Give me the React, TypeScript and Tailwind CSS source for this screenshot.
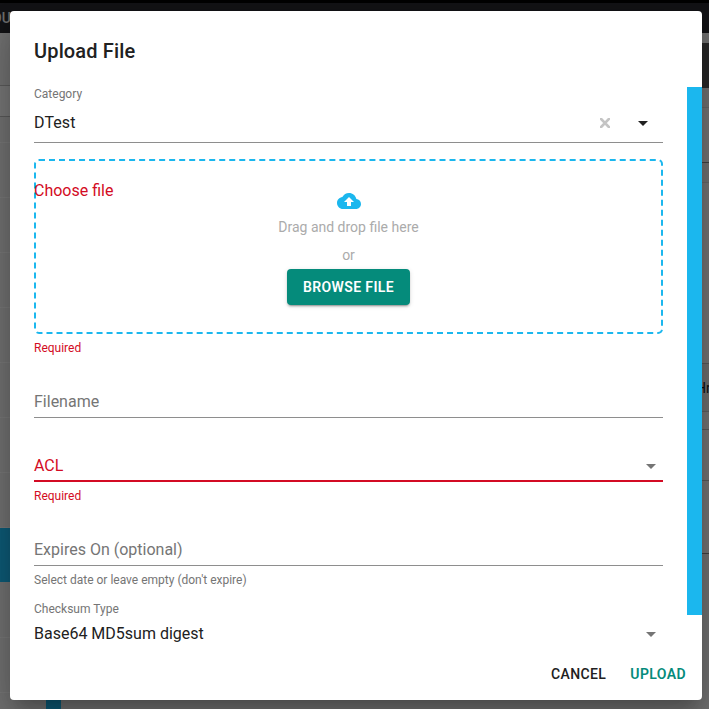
import React from "react";

function Caret({ className }: { className: string }) {
  return (
    <svg viewBox="0 0 24 24" className={`h-6 w-6 shrink-0 fill-current ${className}`}>
      <path d="M7 10l5 5 5-5z" />
    </svg>
  );
}

function Backdrop() {
  return (
    <div className="flex h-full flex-col bg-[#e4e4e4] text-[#1c1c1c]">
      <div className="h-[3px] shrink-0 bg-black" />
      <div className="flex h-[30px] shrink-0 items-center bg-[#26272d] pb-px">
        <span className="-ml-[8px] text-sm font-medium leading-none text-[#dddddd]">OU</span>
      </div>
      <div className="flex min-h-0 flex-1 justify-between">
        <div className="flex w-[61px] flex-col">
          <div className="h-[53px] shrink-0 border-b border-[#b8b8b8]" />
          <div className="h-[31px] shrink-0 border-b border-[#b4b4b4] bg-[#eeeeee]" />
          <div className="h-[26px] shrink-0 border-b border-[#f0f0f0]" />
          {[0, 1, 2, 3, 4, 5, 6].map((n) => (
            <div key={n} className="h-[55px] shrink-0 border-b border-[#f0f0f0]" />
          ))}
          <div className="h-[54px] shrink-0 bg-[#1bb7ee]" />
          <div className="h-[56px] shrink-0 border-b border-[#f0f0f0]" />
          <div className="h-[55px] shrink-0 border-b border-[#f0f0f0]" />
          <div className="ml-[46px] h-4 w-[15px] shrink-0 bg-[#1bb7ee]" />
        </div>
        <div className="flex w-[10px] flex-col">
          <div className="h-[10px] shrink-0" />
          <div className="h-[45px] shrink-0 bg-[#505050]" />
          <div className="h-[20px] shrink-0 border-b border-[#cfcfcf]" />
          <div className="h-[55px] shrink-0 border-b border-[#858585] bg-[#eaeaea]" />
          <div className="h-[20px] shrink-0 border-b border-[#d0d0d0]" />
          <div className="h-[181px] shrink-0 border-b border-[#b5b5b5] bg-[#eaeaea]" />
          <div className="flex h-[48px] shrink-0 items-center border-b border-[#bebebe] bg-[#dddddd]">
            <span className="-ml-[3px] text-sm">Hr</span>
          </div>
          <div className="h-[18px] shrink-0 border-b border-[#b5b5b5] bg-[#eaeaea]" />
          <div className="h-[51px] shrink-0 border-b border-[#b5b5b5] bg-[#eaeaea]" />
          <div className="h-[73px] shrink-0 border-b border-[#858585] bg-[#eaeaea]" />
        </div>
      </div>
    </div>
  );
}

function UploadDialog() {
  return (
    <div className="ml-[10px] mt-[11px] flex h-[689px] w-[692px] flex-col rounded bg-white text-[#212121] shadow-[0_11px_15px_-7px_rgba(0,0,0,0.2),0_24px_38px_3px_rgba(0,0,0,0.14),0_9px_46px_8px_rgba(0,0,0,0.12)]">
      <h2 className="h-[76px] shrink-0 px-6 pt-6 text-xl font-medium leading-8 tracking-[0.15px]">Upload File</h2>

      <div className="flex h-[561px] shrink-0 items-start justify-between pl-6">
        <form className="w-[629px]">
          <div className="h-14 border-b border-[#8e8e8e]">
            <div className="h-[14px] text-xs leading-[14px] text-[#757575]">Category</div>
            <div className="flex h-[43px] items-center">
              <span className="flex-1 text-base leading-5 tracking-[0.1px]">DTest</span>
              <svg viewBox="0 0 10 10" className="mr-[21px] h-[10px] w-[10px] text-[#c4c4c4]">
                <path d="M1 0.8l8 8.4M9 0.8L1 9.2" fill="none" stroke="currentColor" strokeWidth="2.6" strokeLinecap="square" />
              </svg>
              <Caret className="mr-2 text-[#212121]" />
            </div>
          </div>

          <div className="relative mt-4 flex h-[175px] flex-col items-center rounded-[5px] border-2 border-dashed border-[#1bb7ee] pt-7">
            <label className="absolute -left-[2px] top-5 text-base leading-5 text-[#d30b24]">
              Choose file
            </label>
            <svg viewBox="0 0 24 24" className="h-6 w-6 shrink-0 fill-[#1bb7ee]">
              <path d="M19.35 10.04C18.67 6.59 15.64 4 12 4 9.11 4 6.6 5.64 5.35 8.04 2.34 8.36 0 10.91 0 14c0 3.31 2.69 6 6 6h13c2.76 0 5-2.24 5-5 0-2.64-2.05-4.78-4.65-4.96zM14 13v4h-4v-4H7l5-5 5 5h-3z" />
            </svg>
            <p className="mt-1 text-sm leading-5 text-[#ababab]">Drag and drop file here</p>
            <p className="mt-2 text-sm leading-5 text-[#ababab]">or</p>
            <button
              type="button"
              className="mt-1 h-9 w-[123px] shrink-0 rounded bg-[#058b7b] text-sm font-semibold leading-5 tracking-[0.4px] text-white shadow-[0_3px_1px_-2px_rgba(0,0,0,0.2),0_2px_2px_0_rgba(0,0,0,0.14),0_1px_5px_0_rgba(0,0,0,0.12)]"
            >
              BROWSE FILE
            </button>
          </div>
          <p className="mt-[7px] text-xs leading-[14px] text-[#d30b24]">Required</p>

          <div className="mt-[30px] h-[33px] border-b border-[#8e8e8e] pt-[7px] text-base leading-5 text-[#757575]">
            Filename
          </div>

          <div className="mt-8 flex h-8 items-center border-b-2 border-[#d30b24] pt-px text-base leading-5 text-[#d30b24]">
            <span className="flex-1 pt-px">ACL</span>
            <Caret className="mt-px text-[#757575]" />
          </div>
          <p className="mt-[7px] text-xs leading-[14px] text-[#d30b24]">Required</p>

          <div className="mt-[30px] h-[33px] border-b border-[#8e8e8e] pt-[7px] text-base leading-5 text-[#757575]">
            Expires On (optional)
          </div>
          <p className="mt-[7px] text-xs leading-[14px] text-[#757575]">
            Select date or leave empty (don't expire)
          </p>

          <p className="mt-[15px] text-xs leading-[14px] text-[#757575]">Checksum Type</p>
          <div className="mt-[6px] flex h-6 items-center">
            <span className="flex-1 text-base leading-5">Base64 MD5sum digest</span>
            <Caret className="text-[#757575]" />
          </div>
        </form>
        <div className="h-[528px] w-[15px] bg-[#1bb7ee]" />
      </div>

      <div className="flex flex-1 items-center justify-end pr-4 text-sm font-medium tracking-[0.4px]">
        <button type="button" className="mr-6">CANCEL</button>
        <button type="button" className="font-semibold text-[#058b7b]">UPLOAD</button>
      </div>
    </div>
  );
}

export default function App() {
  return (
    <div className="relative h-[709px] w-[709px] overflow-hidden bg-white font-['Roboto',sans-serif]">
      <Backdrop />
      <div className="absolute inset-0 overflow-hidden bg-black/50">
        <UploadDialog />
      </div>
    </div>
  );
}
